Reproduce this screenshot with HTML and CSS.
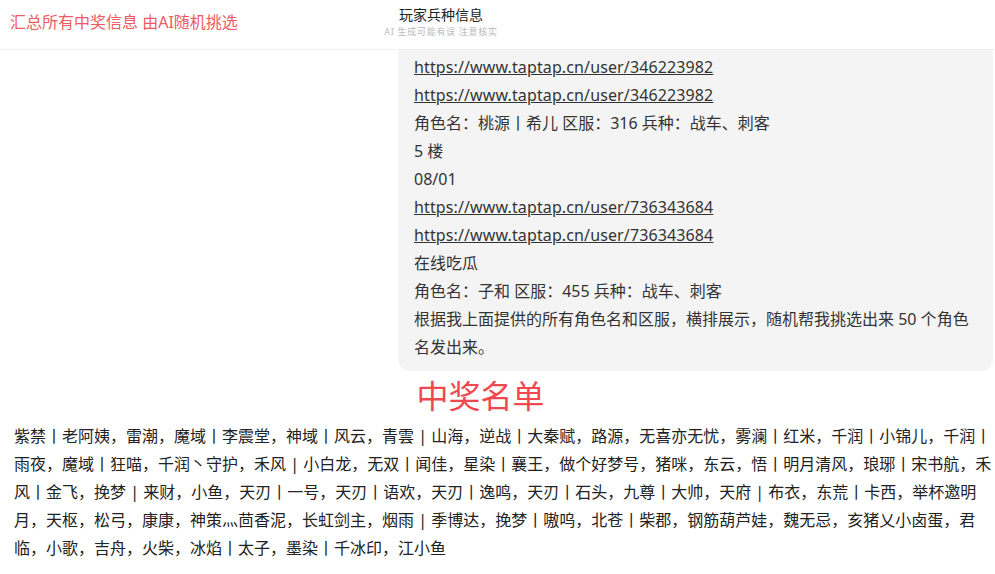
FILE: index.html
```html
<!DOCTYPE html>
<html lang="zh-CN">
<head>
    <meta charset="UTF-8">
    <meta name="viewport" content="width=device-width, initial-scale=1.0">
    <title>玩家兵种信息</title>
    <link rel="stylesheet" href="styles.css">
</head>
<body>
    <div class="topbar">
        <div class="topbar-note">汇总所有中奖信息 由AI随机挑选</div>
        <div class="topbar-title">
            <div class="title">玩家兵种信息</div>
            <div class="subtitle">AI 生成可能有误 注意核实</div>
        </div>
    </div>

    <div class="chat">
        <div class="bubble">
            <div><a href="#">https://www.taptap.cn/user/346223982</a></div>
            <div><a href="#">https://www.taptap.cn/user/346223982</a></div>
            <div>角色名：桃源丨希儿 区服：316 兵种：战车、刺客</div>
            <div>5 楼</div>
            <div>08/01</div>
            <div><a href="#">https://www.taptap.cn/user/736343684</a></div>
            <div><a href="#">https://www.taptap.cn/user/736343684</a></div>
            <div>在线吃瓜</div>
            <div>角色名：子和 区服：455 兵种：战车、刺客</div>
            <div>根据我上面提供的所有角色名和区服，横排展示，随机帮我挑选出来 50 个角色名发出来。</div>
        </div>
    </div>

    <h2 class="winners-title">中奖名单</h2>
    <p class="winners">紫禁丨老阿姨，雷潮，魔域丨李震堂，神域丨风云，青雲 | 山海，逆战丨大秦赋，路源，无喜亦无忧，雾澜丨红米，千润丨小锦儿，千润丨雨夜，魔域丨狂喵，千润丶守护，禾风 | 小白龙，无双丨闻佳，星染丨襄王，做个好梦号，猪咪，东云，悟丨明月清风，琅琊丨宋书航，禾风丨金飞，挽梦 | 来财，小鱼，天刃丨一号，天刃丨语欢，天刃丨逸鸣，天刃丨石头，九尊丨大帅，天府 | 布衣，东荒丨卡西，举杯邀明月，天枢，松弓，康康，神策灬茴香泥，长虹剑主，烟雨 | 季博达，挽梦丨嗷呜，北苍丨柴郡，钢筋葫芦娃，魏无忌，亥猪乂小卤蛋，君临，小歌，吉舟，火柴，冰焰丨太子，墨染丨千冰印，江小鱼</p>
</body>
</html>
```

FILE: styles.css
```css
html {overflow: hidden;}
body {margin: 0; font-family: "Noto Sans", "Noto Sans CJK SC", sans-serif; color: #333333; background: #ffffff;}

/* top bar */
.topbar {height: 50px; display: flex; border-bottom: 1px solid #f0f0f0; box-sizing: border-box;}
.topbar-note {width: 381px; padding: 11px 0 0 10px; box-sizing: border-box; font-size: 16px; line-height: 22px; color: #ef5a60;}
.topbar-title {width: 120px; text-align: center; padding-top: 5px;}
.title {font-size: 14px; line-height: 20px; color: #222222;}
.subtitle {font-size: 9px; line-height: 14px; color: #bbbbbb; white-space: nowrap; letter-spacing: 0.7px;}

/* chat bubble */
.chat {display: flex; justify-content: flex-end; padding-right: 2px;}
.bubble {
    width: 595px;
    box-sizing: border-box;
    background: #f4f4f4;
    border-radius: 0 0 12px 12px;
    padding: 3px 20px 10px 16px;
    font-size: 16px;
    line-height: 28px;
}
.bubble a {color: #333333; text-decoration: underline; letter-spacing: 0.12px;}

/* winners */
.winners-title {margin: 5px 0 0; padding-right: 34px; text-align: center; font-size: 32px; line-height: 40px; font-weight: 400; color: #f0484e;}
.winners {margin: 6px 0 0; padding-left: 14px; font-size: 16px; line-height: 28px; color: #222222;}
```
